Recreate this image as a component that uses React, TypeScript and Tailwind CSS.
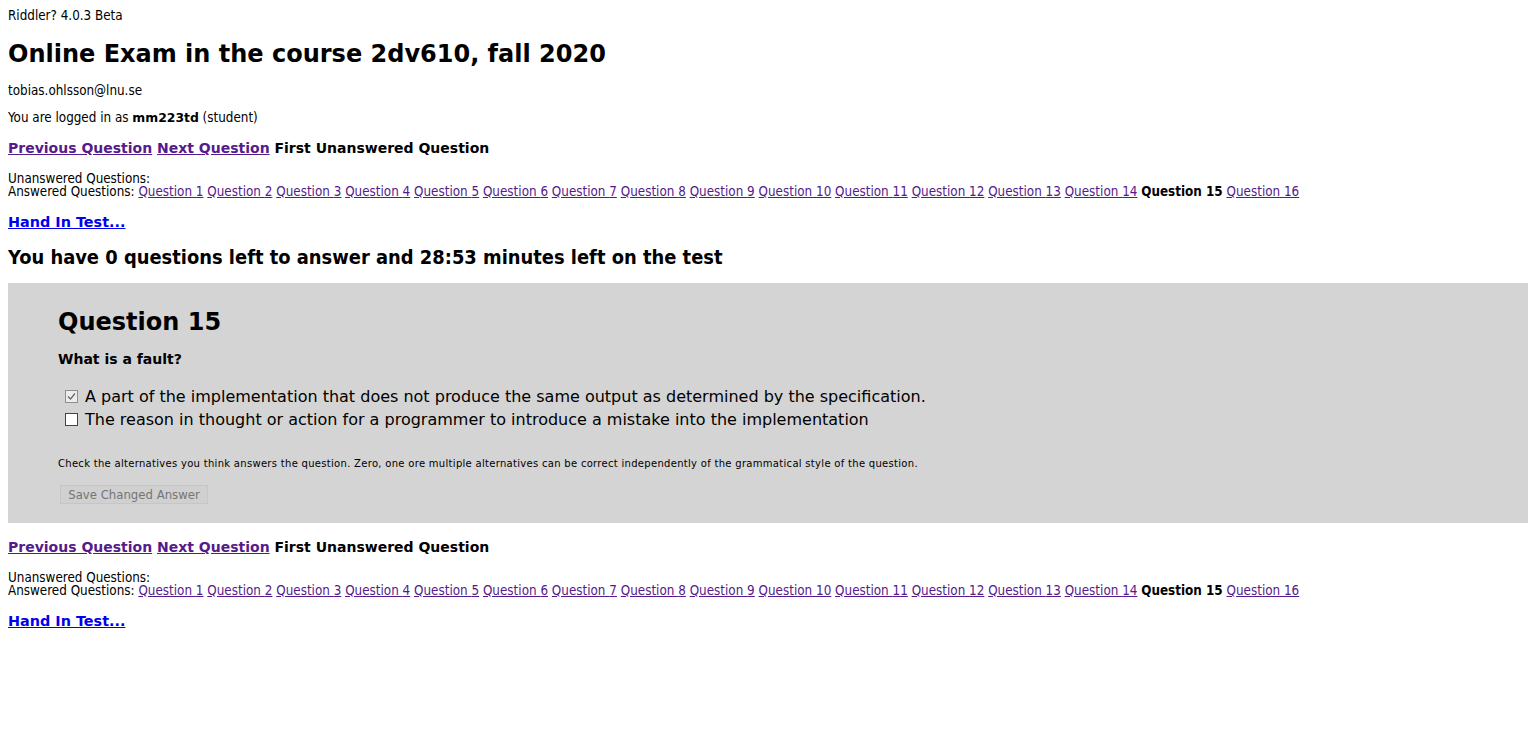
import React from "react";

const tahoma = "font-['DejaVu_Sans_Condensed','DejaVu_Sans',sans-serif]";
const verdana = "font-['DejaVu_Sans',sans-serif]";

function QuestionList() {
  const qs = Array.from({ length: 16 }, (_, i) => i + 1);
  return (
    <div className={`${tahoma} text-[13.33px] leading-[13px]`}>
      <div>Unanswered Questions:</div>
      <div>
        Answered Questions:{" "}
        {qs.map((q) =>
          q === 15 ? (
            <React.Fragment key={q}>
              <b>Question {q}</b>{" "}
            </React.Fragment>
          ) : (
            <React.Fragment key={q}>
              <a href="#" className="text-[#551a8b] underline">Question {q}</a>{" "}
            </React.Fragment>
          )
        )}
      </div>
    </div>
  );
}

function NavBlock() {
  return (
    <>
      <div className={`${verdana} text-[14px] font-bold leading-[18px]`}>
        <a href="#" className="text-[#551a8b] underline">Previous Question</a>{" "}
        <a href="#" className="text-[#551a8b] underline">Next Question</a>{" "}
        <span>First Unanswered Question</span>
      </div>
      <div className="mt-[15px]">
        <QuestionList />
      </div>
      <div className={`${verdana} text-[14.4px] font-bold leading-[18px] mt-[15px]`}>
        <a href="#" className="text-[#0000ee] underline">Hand In Test...</a>
      </div>
    </>
  );
}

export default function App() {
  return (
    <div className="min-h-[750px] bg-white text-black px-[8px] pt-[8px]">
      <div className={`${tahoma} text-[13.33px] leading-[15px]`}>Riddler? 4.0.3 Beta</div>
      <h1 className={`${verdana} text-[24px] font-bold leading-[30px] mt-[16px]`}>
        Online Exam in the course 2dv610, fall 2020
      </h1>
      <div className={`${tahoma} text-[13.33px] leading-[15px] mt-[14px]`}>tobias.ohlsson@lnu.se</div>
      <div className={`${tahoma} text-[13.33px] leading-[15px] mt-[12px]`}>
        You are logged in as <b className={`${verdana} text-[12.4px]`}>mm223td</b> (student)
      </div>
      <div className="mt-[14px]">
        <NavBlock />
      </div>
      <div className={`${tahoma} text-[19.9px] font-bold leading-[22px] mt-[16px]`}>
        You have 0 questions left to answer and 28:53 minutes left on the test
      </div>
      <div className="bg-[#d4d4d4] mt-[14px] h-[240px] pl-[50px] pt-[24px]">
        <h2 className={`${verdana} text-[24px] font-bold leading-[30px]`}>Question 15</h2>
        <div className={`${verdana} text-[14px] font-bold leading-[17px] mt-[14px]`}>What is a fault?</div>
        <div className={`${verdana} text-[16px] leading-[23px] mt-[17px]`}>
          <label className="flex items-center gap-[7px] pl-[7px]">
            <span className="w-[13px] h-[13px] border border-[#8f8f8f] bg-[#ececec] flex items-center justify-center">
              <svg width="9" height="9" viewBox="0 0 9 9">
                <path d="M1 4.5 L3.5 7 L8 1.5" fill="none" stroke="#666" strokeWidth="1.2" />
              </svg>
            </span>
            <span>A part of the implementation that does not produce the same output as determined by the specification.</span>
          </label>
          <label className="flex items-center gap-[7px] pl-[7px]">
            <span className="w-[13px] h-[13px] border border-[#444] bg-white" />
            <span>The reason in thought or action for a programmer to introduce a mistake into the implementation</span>
          </label>
        </div>
        <div className={`${verdana} text-[10px] tracking-[0.3px] leading-[12px] mt-[27px]`}>
          Check the alternatives you think answers the question. Zero, one ore multiple alternatives can be correct independently of the grammatical style of the question.
        </div>
        <button className={`${tahoma} mt-[15px] ml-[2px] w-[148px] h-[19px] text-[13px] leading-[17px] text-[#757575] bg-[#d0d0d0] border border-[#c6c6c6]`}>
          Save Changed Answer
        </button>
      </div>
      <div className="mt-[15px]">
        <NavBlock />
      </div>
    </div>
  );
}
